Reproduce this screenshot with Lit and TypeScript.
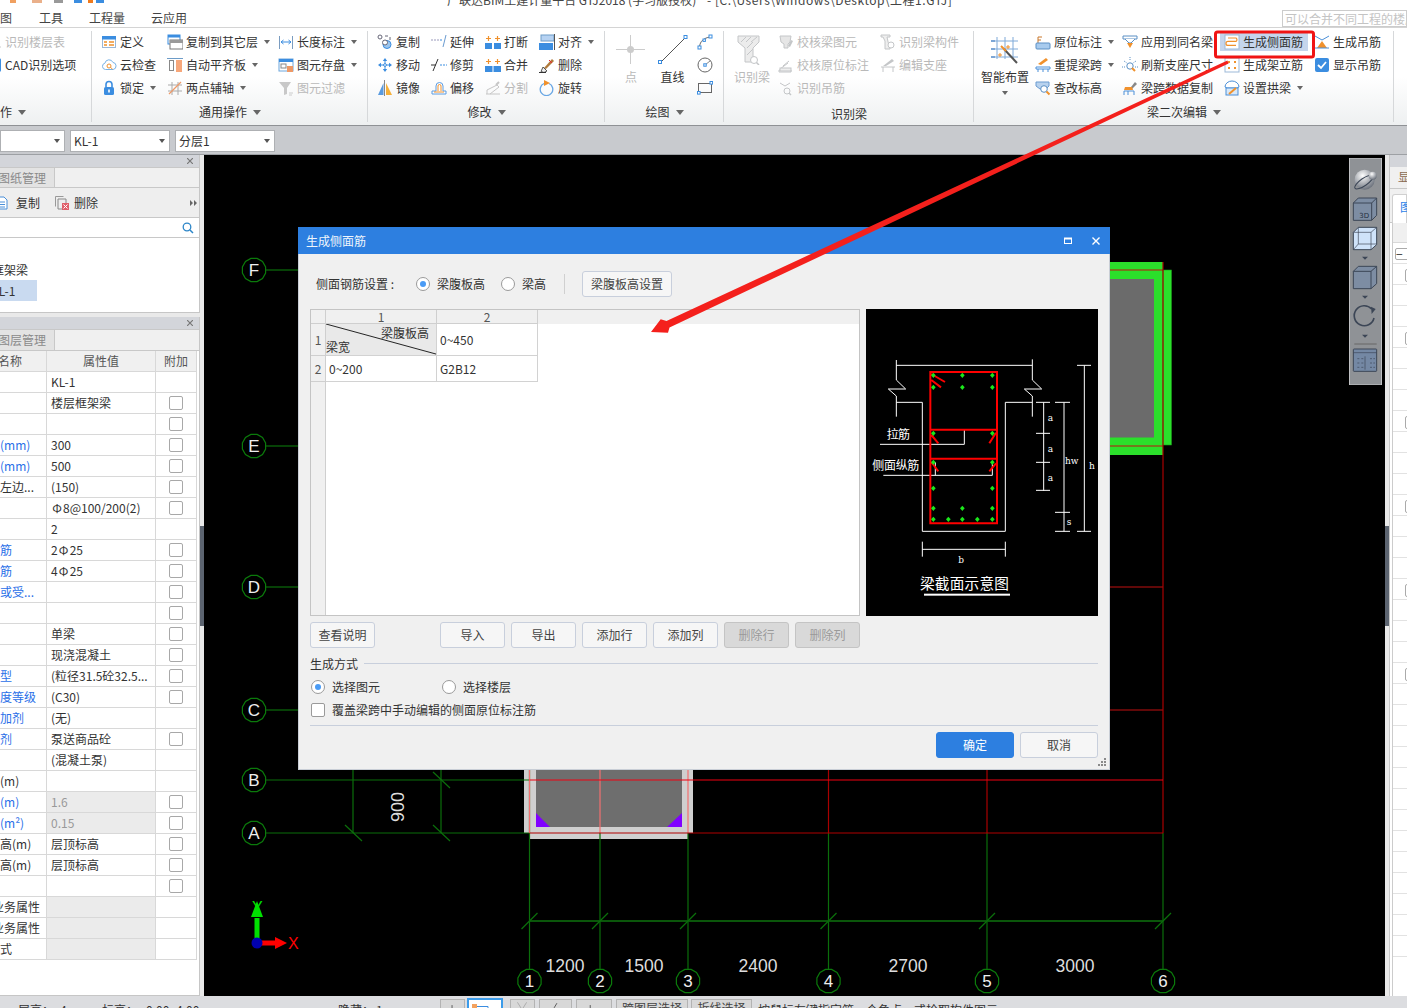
import { LitElement, html, css, svg, TemplateResult } from "lit";
import { customElement } from "lit/decorators.js";

const B = "#3b8de0", O = "#f0912c", G = "#c4c6c8", D = "#444";
const I: Record<string, TemplateResult> = {
  def: svg`<rect x="1.5" y="2.5" width="13" height="11" fill="#fff" stroke="#9bb8d8"/><rect x="1" y="2" width="14" height="3.5" fill="${B}"/><path d="M3 8h3M8 8h5M3 11h3M8 11h5" stroke="${O}" stroke-width="1.3"/>`,
  cloud: svg`<path d="M4.5 12.5a3.2 3.2 0 0 1-.6-6.3 4.2 4.2 0 0 1 8-.8 3.6 3.6 0 0 1 .3 7.1z" fill="#fff" stroke="#79b2e6"/><circle cx="8" cy="9" r="2" fill="none" stroke="${O}"/><path d="M9.5 10.5l2 1.5" stroke="${O}"/>`,
  lock: svg`<rect x="3" y="7" width="10" height="8" rx="1.5" fill="${B}"/><path d="M5 7V4.5a3 3 0 0 1 6 0V7" fill="none" stroke="${B}" stroke-width="1.6"/><rect x="7.2" y="9.5" width="1.6" height="3" fill="#fff"/>`,
  copyL: svg`<rect x="1" y="1" width="12" height="9" fill="#fff" stroke="${B}"/><rect x="1" y="1" width="12" height="2.5" fill="${B}"/><rect x="3" y="6" width="13" height="9" fill="#fff" stroke="#777"/><rect x="3" y="6" width="13" height="3" fill="#9a9a9a"/>`,
  align: svg`<path d="M0 1.5h16" stroke="#6d9cc8"/><rect x="2.5" y="3.5" width="4" height="10" fill="#fff" stroke="#888"/><rect x="9" y="3" width="6" height="12" fill="#f7a77a"/>`,
  twopt: svg`<path d="M5 2v13M11 2v13M1 5h14M1 11h14" stroke="#aaa"/><path d="M2 14L14 2" stroke="#ef9a68" stroke-width="1.2"/>`,
  len: svg`<path d="M1.5 2v13M14.5 2v13" stroke="#7a9cc0"/><path d="M3 8h10M3 8l2.5-2M3 8l2.5 2M13 8l-2.5-2M13 8l-2.5 2" stroke="${B}" fill="none"/>`,
  save: svg`<rect x="1" y="2" width="14" height="12" fill="#fff" stroke="#6da6dc"/><rect x="1" y="2" width="14" height="3" fill="${B}"/><rect x="3" y="7" width="5" height="4" fill="#fff" stroke="#888"/><rect x="9" y="9" width="6" height="6" fill="#e96"/>`,
  filter: svg`<path d="M1 2h12L9 8v6l-3 1V8z" fill="#c8c8c8"/><path d="M11 13h4M11 15h3" stroke="#ccc"/>`,
  copy: svg`<circle cx="3" cy="3" r="2" fill="#fff" stroke="#667"/><path d="M8 2h3M13 3v3" stroke="#667"/><circle cx="10" cy="10.5" r="4" fill="#9cc6ee" stroke="${B}"/><circle cx="8" cy="8.5" r="2.5" fill="#fff" stroke="#667"/>`,
  move: svg`<path d="M8 1L5.8 4h4.4zM8 15l-2.2-3h4.4zM1 8l3-2.2v4.4zM15 8l-3-2.2v4.4z" fill="${B}"/><path d="M8 4v8M4 8h8" stroke="${B}"/><circle cx="8" cy="8" r="1.4" fill="#fff" stroke="${B}"/>`,
  mirror: svg`<path d="M1 15L6.5 3v12z" fill="#5a9be0"/><path d="M7.5 0v16" stroke="#888"/><path d="M9 3l6 12H9z" fill="#f6b13a"/>`,
  extend: svg`<path d="M0 6h8" stroke="#99b" stroke-dasharray="2 1"/><path d="M9 6h3" stroke="${B}" stroke-dasharray="2 1"/><path d="M15 1l-3 12" stroke="#6a9bd0"/>`,
  trim: svg`<path d="M0 8h5" stroke="#333"/><path d="M9 8h7" stroke="${B}" stroke-dasharray="2 1"/><path d="M2 14L7 2" stroke="#333"/>`,
  offset: svg`<path d="M1 14h14v-3h-3V6a3 3 0 0 0-7 0v5H1z" fill="#fff" stroke="#5a9be0"/><path d="M3 12h10M7 11V6a1.5 1.5 0 0 1 3 0v5" fill="none" stroke="${O}"/>`,
  brk: svg`<rect x="0" y="9" width="7" height="6" fill="${B}"/><rect x="9" y="9" width="7" height="6" fill="${B}"/><path d="M3.5 2v5M1 4.5h5M12.5 2v5M10 4.5h5" stroke="${O}" stroke-width="1.2"/>`,
  merge: svg`<rect x="0" y="9" width="16" height="6" fill="${B}"/><path d="M8 9v6" stroke="#fff"/><path d="M3.5 2v5M1 4.5h5M12.5 2v5M10 4.5h5" stroke="${O}" stroke-width="1.2"/>`,
  split: svg`<path d="M1 14h14M2 14v-4l10-5 2 2-9 7" fill="none" stroke="#c6c6c6"/><path d="M11 5l3-3" stroke="#c6c6c6" stroke-width="2"/>`,
  alignT: svg`<rect x="2" y="1" width="13" height="6" fill="#b6d2f2" stroke="#6d9cc8"/><rect x="0" y="9" width="14" height="7" fill="${B}"/><path d="M15.5 0v16" stroke="#555"/>`,
  del: svg`<path d="M5 11l8-9 2 2-8 8z" fill="#b07a3c"/><path d="M4 10l4 4-3 1.5-3-1z" fill="#eee" stroke="#555"/><path d="M0 15.5h7" stroke="#333"/><path d="M10 3l3 3" stroke="#e23"/>`,
  rot: svg`<path d="M5 3.5a6.3 6.3 0 1 0 5 0" fill="none" stroke="#6aa7e4" stroke-width="1.3"/><path d="M5 0l6 3-6 3z" fill="${O}"/>`,
  chk: svg`<path d="M2 2h11l-1 6-2 2v4H6v-4L3 8z" fill="#e6e6e6" stroke="${G}"/><path d="M10 12l3-6 2 1-3 6z" fill="${G}"/>`,
  chk2: svg`<path d="M1 13h12v2H1zM2 12l8-6M5 9l6-5" stroke="${G}" fill="none"/><rect x="2" y="11" width="11" height="3" fill="#eee" stroke="${G}"/>`,
  hang: svg`<path d="M2 3l5 3 5-3" fill="none" stroke="${G}"/><circle cx="9" cy="11" r="3" fill="none" stroke="${G}"/><path d="M11 13l2 2" stroke="${G}" stroke-width="1.5"/>`,
  rec: svg`<path d="M1 1h9v2H7l2 9 1 1v2H5V7L3 3H1z" fill="#eee" stroke="${G}"/><circle cx="11" cy="11" r="3" fill="#fff" stroke="${G}"/>`,
  seat: svg`<path d="M1 10h14M3 10v5M13 10v5" stroke="${G}"/><path d="M3 9l9-7 2 2-8 5z" fill="${G}"/>`,
  place: svg`<path d="M3 3v7" stroke="#c9772a"/><path d="M3 3h4M3 6h3" stroke="#c9772a"/><rect x="1" y="9" width="14" height="6" rx="1" fill="#a8cbee" stroke="#5b8fc4"/>`,
  lift: svg`<path d="M3 7l8-6 2 2-7 5" fill="${O}"/><path d="M1 10h14v2H1zM3 12v3M8 12v3M13 12v3" fill="none" stroke="#4a8fd8"/>`,
  modz: svg`<path d="M1 2h13v4l-3 3H5L1 6z" fill="#b8d2ee" stroke="#6a9bd0"/><circle cx="9" cy="9" r="3.3" fill="#fff" stroke="#5a8fc4"/><path d="M11.5 11.5l3 3" stroke="${O}" stroke-width="2"/>`,
  apply: svg`<path d="M1 2h14v3H1z" fill="#fff" stroke="#5a8fc4"/><path d="M3 5l4 4h2l4-4" fill="#fff" stroke="#5a8fc4"/><path d="M5 9h6l-3 5z" fill="${O}"/>`,
  refresh: svg`<circle cx="8" cy="9" r="3.2" fill="#fff" stroke="#5a8fc4"/><path d="M8 0v4M2 4l3 2M14 4l-3 2M0 10h3M13 10h3" stroke="#5a8fc4" stroke-dasharray="1 1"/><path d="M10 11l3 3" stroke="${O}" stroke-width="2"/>`,
  brush: svg`<path d="M9 7l4-5 2 2-5 5z" fill="#888"/><path d="M3 7l7 0 1 3H2z" fill="${O}"/><path d="M2 11h10v4M2 11v4M6 11v4" fill="none" stroke="#4a8fd8"/>`,
  side: svg`<rect x="1" y="1" width="14" height="14" fill="#fff" stroke="#9db9d8"/><path d="M4 4h8a2 2 0 0 1 0 3.4H4a2 2 0 0 0 0 4h8" fill="none" stroke="${O}" stroke-width="1.2"/>`,
  stand: svg`<rect x="1" y="1" width="14" height="14" fill="#fff" stroke="#9db9d8"/><path d="M4 4h2v2H4zM10 4h2v2h-2zM4 10h2v2H4zM10 10h2v2h-2z" fill="${O}"/>`,
  arch: svg`<path d="M1 7a7 6 0 0 1 14 0l-2 1H3z" fill="#fff" stroke="#4a8fd8"/><rect x="2" y="8" width="12" height="7" fill="#d8e8f8" stroke="#4a8fd8"/><path d="M5 14l7-6" stroke="${O}" stroke-width="2"/>`,
  hang2: svg`<path d="M1 2l7 4 7-4" fill="none" stroke="#4a8fd8"/><path d="M8 7l5 7H3z" fill="${O}"/><path d="M1 14h14" stroke="#4a8fd8"/>`,
  tick: svg`<rect x="1" y="1" width="14" height="14" rx="2" fill="#3b8de0"/><path d="M4 8l3 3 5-6" fill="none" stroke="#fff" stroke-width="1.8"/>`,
  arc: svg`<path d="M2.5 13C3 7 7 4 13 3" fill="none" stroke="#666"/><rect x="1" y="12" width="3" height="3" fill="#fff" stroke="${B}"/><rect x="12" y="1" width="3" height="3" fill="#fff" stroke="${B}"/><rect x="6" y="5" width="2.4" height="2.4" fill="#fff" stroke="${B}"/>`,
  circ: svg`<circle cx="8" cy="8" r="7" fill="none" stroke="#666"/><path d="M8 8l5-4" stroke="#888"/><rect x="6.8" y="6.8" width="2.4" height="2.4" fill="#fff" stroke="${B}"/>`,
  rect: svg`<rect x="1.5" y="3.5" width="13" height="9" fill="none" stroke="#666"/><rect x="0.5" y="11.5" width="2.6" height="2.6" fill="#fff" stroke="${B}"/><rect x="13" y="1.5" width="2.6" height="2.6" fill="#fff" stroke="${B}"/>`,
};

type Item = { i?: string; t?: string; a?: boolean; d?: boolean; hl?: boolean };
type Block =
  | { w: number; rows: Item[] }
  | { w: number; big: TemplateResult; t: string; d?: boolean; a?: boolean; h: number; mr?: number };
type Group = { w: number; pad: number; label: string; arrow: boolean; left?: boolean; low?: boolean; blocks: Block[] };

const bigPoint = svg`<path d="M14.5 0v29M0 14.5h29" stroke="#ccc"/><circle cx="14.5" cy="14.5" r="3.5" fill="#ccc"/>`;
const bigLine = svg`<path d="M3 27L27 3" stroke="#555"/><rect x="0.5" y="25.5" width="3" height="3" fill="#fff" stroke="${B}"/><rect x="26" y="0.5" width="3" height="3" fill="#fff" stroke="${B}"/>`;
const bigBeam = svg`<path d="M1 1h21v6l-6 6v14H8V13L1 7z" fill="#ececec" stroke="${G}"/><path d="M4 7l5-5M9 7l5-5M14 7l6-5M10 13l6-6M10 20l6-6" stroke="${G}"/><circle cx="17" cy="25" r="3.5" fill="#fff" stroke="${G}"/><path d="M19.5 27.5l2.5 2.5" stroke="${G}" stroke-width="1.5"/>`;
const bigSmart = svg`<path d="M7 2v22M15 2v22M23 2v22M1 6h27M1 14h27M1 22h27" stroke="#7fa9d8"/><path d="M1 6h4M1 14h4M1 22h4" stroke="#3b78c0"/><path d="M14 14l13 14" stroke="#555" stroke-width="2"/><path d="M11 11l5 5" stroke="${O}" stroke-width="2"/><path d="M18 10v4M16 12h4M10 18v4M8 20h4" stroke="${O}"/>`;

const GROUPS: Group[] = [
  { w: 92, pad: -14, label: "作", arrow: true, left: true, blocks: [
    { w: 100, rows: [{ i: "filter", t: "识别楼层表", d: true }, { i: "tick", t: "CAD识别选项" }] },
  ] },
  { w: 276, pad: 9, label: "通用操作", arrow: true, blocks: [
    { w: 66, rows: [{ i: "def", t: "定义" }, { i: "cloud", t: "云检查" }, { i: "lock", t: "锁定", a: true }] },
    { w: 111, rows: [{ i: "copyL", t: "复制到其它层", a: true }, { i: "align", t: "自动平齐板", a: true }, { i: "twopt", t: "两点辅轴", a: true }] },
    { w: 88, rows: [{ i: "len", t: "长度标注", a: true }, { i: "save", t: "图元存盘", a: true }, { i: "filter", t: "图元过滤", d: true }] },
  ] },
  { w: 237, pad: 9, label: "修改", arrow: true, blocks: [
    { w: 54, rows: [{ i: "copy", t: "复制" }, { i: "move", t: "移动" }, { i: "mirror", t: "镜像" }] },
    { w: 54, rows: [{ i: "extend", t: "延伸" }, { i: "trim", t: "修剪" }, { i: "offset", t: "偏移" }] },
    { w: 54, rows: [{ i: "brk", t: "打断" }, { i: "merge", t: "合并" }, { i: "split", t: "分割", d: true }] },
    { w: 60, rows: [{ i: "alignT", t: "对齐", a: true }, { i: "del", t: "删除" }, { i: "rot", t: "旋转" }] },
  ] },
  { w: 119, pad: 5, label: "绘图", arrow: true, blocks: [
    { w: 42, big: bigPoint, t: "点", d: true, h: 29 },
    { w: 41, big: bigLine, t: "直线", h: 29, mr: 4 },
    { w: 20, rows: [{ i: "arc" }, { i: "circ" }, { i: "rect" }] },
  ] },
  { w: 250, pad: 6, label: "识别梁", arrow: false, low: true, blocks: [
    { w: 44, big: bigBeam, t: "识别梁", d: true, h: 30, mr: 4 },
    { w: 102, rows: [{ i: "chk", t: "校核梁图元", d: true }, { i: "chk2", t: "校核原位标注", d: true }, { i: "hang", t: "识别吊筋", d: true }] },
    { w: 90, rows: [{ i: "rec", t: "识别梁构件", d: true }, { i: "seat", t: "编辑支座", d: true }] },
  ] },
  { w: 420, pad: 4, label: "梁二次编辑", arrow: true, blocks: [
    { w: 54, big: bigSmart, t: "智能布置", a: true, h: 30, mr: 3 },
    { w: 87, rows: [{ i: "place", t: "原位标注", a: true }, { i: "lift", t: "重提梁跨", a: true }, { i: "modz", t: "查改标高" }] },
    { w: 102, rows: [{ i: "apply", t: "应用到同名梁" }, { i: "refresh", t: "刷新支座尺寸" }, { i: "brush", t: "梁跨数据复制" }] },
    { w: 90, rows: [{ i: "side", t: "生成侧面筋", hl: true }, { i: "stand", t: "生成架立筋" }, { i: "arch", t: "设置拱梁", a: true }] },
    { w: 70, rows: [{ i: "hang2", t: "生成吊筋" }, { i: "tick", t: "显示吊筋" }] },
  ] },
];

type Row = { n?: string; v?: string; c?: boolean; g?: boolean; b?: boolean; crop?: boolean };
const ROWS: Row[] = [
  { v: "KL-1" },
  { v: "楼层框架梁", c: true },
  { c: true },
  { n: "(mm)", v: "300", c: true, b: true },
  { n: "(mm)", v: "500", c: true, b: true },
  { n: "左边...", v: "(150)", c: true },
  { v: "Φ8@100/200(2)", c: true },
  { v: "2" },
  { n: "筋", v: "2Φ25", c: true, b: true },
  { n: "筋", v: "4Φ25", c: true, b: true },
  { n: "或受...", c: true, b: true },
  { c: true },
  { v: "单梁", c: true },
  { v: "现浇混凝土", c: true },
  { n: "型", v: "(粒径31.5砼32.5...", c: true, b: true },
  { n: "度等级", v: "(C30)", c: true, b: true },
  { n: "加剂", v: "(无)", b: true },
  { n: "剂", v: "泵送商品砼", c: true, b: true },
  { v: "(混凝土泵)" },
  { n: "(m)" },
  { n: "(m)", v: "1.6", c: true, g: true, b: true },
  { n: "(m²)", v: "0.15", c: true, g: true, b: true },
  { n: "高(m)", v: "层顶标高", c: true },
  { n: "高(m)", v: "层顶标高", c: true },
  { c: true },
  { n: "业务属性", g: true, crop: true },
  { n: "业务属性", g: true, crop: true },
  { n: "式", g: true },
];

const poly12 = (cx: number, cy: number, r: number) =>
  Array.from({ length: 12 }, (_, k) => {
    const a = (Math.PI / 6) * k + Math.PI / 12;
    return `${(cx + r * Math.cos(a)).toFixed(1)},${(cy + r * Math.sin(a)).toFixed(1)}`;
  }).join(" ");

const H_AXES: [string, number][] = [["F", 270], ["E", 446], ["D", 587], ["C", 710], ["B", 780], ["A", 833]];
const V_AXES: [string, number][] = [["1", 529.5], ["2", 600], ["3", 688], ["4", 828.5], ["5", 987], ["6", 1163]];
const DIMS: [string, number][] = [["1200", 565], ["1500", 644], ["2400", 758], ["2700", 908], ["3000", 1075]];
const DOTS = [[220,226],[307,226],[397,226],[220,262],[307,262],[397,262],[220,400],[397,400],[220,487],[397,487],[220,565],[397,565],[220,625],[307,625],[397,625],[220,658],[265,658],[307,658],[352,658],[397,658]];

@customElement("section-diagram")
class SectionDiagram extends LitElement {
  static styles = css`
    :host { display: block; width: 232px; height: 307px; background: #000; }
    svg { display: block; width: 232px; height: 307px; }
    .w { fill: none; stroke: #fff; stroke-width: 3; }
    .r { fill: none; stroke: #f00; stroke-width: 6; }
    text { fill: #fff; font-family: "Noto Sans CJK SC", sans-serif; }
    .s { font-family: "DejaVu Serif", serif; font-size: 27px; }
  `;
  render() {
    return html`<svg viewBox="18 27 696 921">
      <path class="w" d="M109 196H517M109 180V240L137 267H85L109 288V350M517 178V240L545 267H493L517 288V350"/>
      <path class="w" d="M109 307H187V694H436V307H517"/>
      <path class="w" d="M187 748H436M187 725V770M436 725V770"/>
      <path class="w" d="M551 307V572M528 307H570M528 400H570M528 487H570M528 571H570"/>
      <path class="w" d="M612 307V694M585 307H630M585 637H630M585 694H630M651 196H693M651 694H693M673 196V694"/>
      <path class="w" d="M60 433H313V390M70 526H397V490M226 526V487"/>
      <path class="r" d="M211 216H411V670H211ZM211 389H411M211 476H411M214 222L255 246M214 240L243 262M214 405L235 430M408 398L388 430M214 486L235 514M408 490L388 514"/>
      ${DOTS.map(([x, y]) => svg`<path d="M${x} ${y - 8}L${x + 7} ${y}L${x} ${y + 8}L${x - 7} ${y}Z" fill="#1be81b"/>`)}
      <text x="80" y="416" font-size="36" textLength="70">拉筋</text>
      <text x="37" y="510" font-size="36" textLength="141">侧面纵筋</text>
      <text x="180" y="866" font-size="44" textLength="267">梁截面示意图</text>
      <rect x="192" y="881" width="258" height="6" fill="#fff"/>
      <text class="s" x="295" y="788">b</text>
      <text class="s" x="563" y="362">a</text><text class="s" x="563" y="455">a</text><text class="s" x="563" y="543">a</text>
      <text class="s" x="615" y="491">hw</text><text class="s" x="687" y="507">h</text><text class="s" x="620" y="675">s</text>
    </svg>`;
  }
}

@customElement("gen-dialog")
class GenDialog extends LitElement {
  static styles = css`
    :host { display: flex; flex-direction: column; box-sizing: border-box; width: 812px; height: 543px; background: #f0f0f0; border: 1px solid #c9ced6; border-top: 0; font: 12px/16px "Noto Sans CJK SC", sans-serif; color: #333; position: relative; }
    .title { height: 27px; margin: 0 -1px; background: #2d7fe0; color: #fff; display: flex; align-items: center; padding: 0 0 0 8px; flex: none; }
    .title span { flex: 1; opacity: .92; }
    .title svg { width: 10px; height: 10px; display: block; }
    .tb { width: 28px; display: flex; justify-content: center; }
    .body { padding: 0 11px; display: flex; flex-direction: column; flex: 1; }
    .set { display: flex; align-items: center; padding: 17px 0 0 6px; height: 26px; margin-bottom: 12px; box-sizing: content-box; }
    .lab { width: 100px; }
    .radio { width: 12px; height: 12px; border: 1px solid #9a9a9a; border-radius: 50%; background: #fff; flex: none; display: flex; align-items: center; justify-content: center; }
    .radio.on::after { content: ""; width: 6px; height: 6px; border-radius: 50%; background: #4a9bf5; }
    .opt { display: flex; align-items: center; gap: 7px; }
    .o1 { width: 85px; }
    .o2 { width: 63px; }
    .sep { width: 1px; height: 20px; background: #d0d0d0; margin-right: 17px; }
    .btn { width: 65px; height: 26px; box-sizing: border-box; border: 1px solid #c8cfdc; border-radius: 3px; background: #f6f6f6; color: #444; display: flex; align-items: center; justify-content: center; flex: none; }
    .btn.wide { width: 90px; }
    .btn.off { background: #d9d9d9; color: #9a9a9a; border-color: #c4c4c4; }
    .btn.pri { width: 78px; background: #2d7fe0; border-color: #2d7fe0; color: #fff; }
    .btn.ok { width: 78px; }
    .mid { display: flex; gap: 6px; height: 307px; flex: none; }
    .sheet { width: 550px; box-sizing: border-box; border: 1px solid #c4c4c4; background: #fff; display: grid; grid-template-columns: 15px 111px 101px 1fr; grid-template-rows: 14px 32px 26px 1fr; }
    .sheet > div { box-sizing: border-box; color: #333; line-height: 14px; }
    .hd { background: #f0f0f0; border-right: 1px solid #cfcfcf; border-bottom: 1px solid #cfcfcf; text-align: center; color: #555 !important; display: flex; align-items: center; justify-content: center; }
    .gut { background: #f0f0f0; border-right: 1px solid #cfcfcf; }
    .fill { background: #f0f0f0; }
    .cell { border-right: 1px solid #d2d2d2; border-bottom: 1px solid #d2d2d2; display: flex; align-items: center; padding-left: 3px; }
    .diag { position: relative; background: #e9e9e9; padding: 0; }
    .diag svg { position: absolute; inset: 0; width: 100%; height: 100%; }
    .diag .a { position: absolute; right: 7px; top: 2px; }
    .diag .b { position: absolute; left: 0; bottom: 1px; }
    .btns { display: flex; gap: 6px; margin-top: 6px; flex: none; }
    .push { margin-left: 59px; }
    .mode { display: flex; align-items: center; gap: 6px; height: 16px; margin-top: 8px; flex: none; }
    .mode i { flex: 1; height: 1px; background: #c8cfdc; margin-top: -2px; }
    .line { display: flex; align-items: center; height: 16px; margin-top: 7px; padding-left: 1px; flex: none; }
    .line .first { width: 131px; }
    .cb { width: 12px; height: 12px; border: 1px solid #9a9a9a; border-radius: 2px; background: #fff; flex: none; margin-right: 7px; }
    hr { border: 0; height: 1px; background: #c8cfdc; margin: 7px 0 0; flex: none; width: 100%; }
    .foot { display: flex; justify-content: flex-end; gap: 6px; margin-top: 6px; flex: none; }
    .grip { position: absolute; right: 3px; bottom: 3px; width: 8px; height: 8px; }
  `;
  render() {
    return html`
      <div class="title"><span>生成侧面筋</span>
        <div class="tb"><svg viewBox="0 0 10 10"><rect x="1.5" y="2.5" width="7" height="5" fill="none" stroke="#fff"/><path d="M1 2.5h8" stroke="#fff" stroke-width="2"/></svg></div>
        <div class="tb"><svg viewBox="0 0 10 10"><path d="M1.5 1.5l7 7M8.5 1.5l-7 7" stroke="#fff" stroke-width="1.4"/></svg></div>
      </div>
      <div class="body">
        <div class="set">
          <div class="lab">侧面钢筋设置 :</div>
          <div class="opt o1"><div class="radio on"></div>梁腹板高</div>
          <div class="opt o2"><div class="radio"></div>梁高</div>
          <div class="sep"></div>
          <div class="btn wide">梁腹板高设置</div>
        </div>
        <div class="mid">
          <div class="sheet">
            <div class="hd"></div><div class="hd">1</div><div class="hd">2</div><div class="fill"></div>
            <div class="hd">1</div>
            <div class="cell diag"><svg viewBox="0 0 110 32" preserveAspectRatio="none"><path d="M0 0L110 31" stroke="#222"/></svg><span class="a">梁腹板高</span><span class="b">梁宽</span></div>
            <div class="cell">0~450</div><div></div>
            <div class="hd">2</div><div class="cell">0~200</div><div class="cell">G2B12</div><div></div>
            <div class="gut"></div><div></div><div></div><div></div>
          </div>
          <section-diagram></section-diagram>
        </div>
        <div class="btns">
          <div class="btn">查看说明</div>
          <div class="btn push">导入</div><div class="btn">导出</div><div class="btn">添加行</div><div class="btn">添加列</div>
          <div class="btn off">删除行</div><div class="btn off">删除列</div>
        </div>
        <div class="mode">生成方式<i></i></div>
        <div class="line">
          <div class="opt first"><div class="radio on"></div>选择图元</div>
          <div class="opt"><div class="radio"></div>选择楼层</div>
        </div>
        <div class="line"><div class="cb"></div>覆盖梁跨中手动编辑的侧面原位标注筋</div>
        <hr />
        <div class="foot"><div class="btn pri">确定</div><div class="btn ok">取消</div></div>
      </div>
      <svg class="grip" viewBox="0 0 8 8"><path d="M6 0h2v2H6zM3 3h2v2H3zM6 3h2v2H6zM0 6h2v2H0zM3 6h2v2H3zM6 6h2v2H6z" fill="#8a8a8a"/></svg>
    `;
  }
}

@customElement("app-root")
class AppRoot extends LitElement {
  static styles = css`
    :host { display: block; width: 1407px; height: 1008px; overflow: hidden; position: relative; font: 12px/16px "Noto Sans CJK SC", sans-serif; color: #333; background: #c8cace; }
    .app { display: flex; flex-direction: column; width: 1407px; height: 1008px; }
    .top { background: #fff; height: 27px; border-bottom: 1px solid #d4d4d4; flex: none; position: relative; }
    .title { height: 8px; overflow: hidden; line-height: 0; padding-left: 447px; color: #444; white-space: pre; position: relative; }
    .title .path { letter-spacing: .55px; }
    .quick { position: absolute; left: 0; top: 0; display: flex; height: 3px; }
    .quick i { display: block; height: 3px; }
    .q1 { width: 6px; margin-left: 10px; background: #f0a060; }
    .q2 { width: 10px; margin-left: 16px; background: #eab08a; }
    .q3 { width: 9px; margin-left: 12px; background: #999; }
    .q4 { width: 8px; margin-left: 11px; background: #3b8de0; }
    .q5 { width: 5px; margin-left: 6px; background: #f07a1c; }
    .q6 { width: 8px; margin-left: 3px; background: #3b8de0; }
    .menu { display: flex; height: 19px; align-items: center; line-height: 19px; color: #444; position: relative; }
    .menu .m0 { margin-right: 27px; margin-left: -12px; }
    .menu .m1 { margin-right: 26px; }
    .menu .m2 { margin-right: 26px; }
    .hint { position: absolute; left: 1282px; top: 10px; width: 125px; height: 17px; box-sizing: border-box; border: 1px solid #ccc; color: #c4c4c4; background: #fff; line-height: 15px; padding-left: 2px; white-space: nowrap; overflow: hidden; }
    .ribbon { display: flex; height: 97px; flex: none; background: linear-gradient(#fff 0, #fff 50%, #eef0f1 100%); box-shadow: 0 1px 0 #8f9195; position: relative; z-index: 1; overflow: hidden; }
    .group { flex: none; box-sizing: border-box; display: flex; flex-direction: column; position: relative; }
    .group::after { content: ""; position: absolute; right: 0; top: 3px; bottom: 3px; width: 1px; background: #d6d8da; }
    .gbody { display: flex; height: 70px; padding-top: 2px; box-sizing: content-box; flex: none; }
    .col { display: flex; flex-direction: column; flex: none; }
    .item { height: 23px; display: flex; align-items: center; white-space: nowrap; position: relative; }
    .item > * { position: relative; }
    .ic { width: 16px; height: 16px; margin-right: 3px; flex: none; display: block; }
    .item.d { color: #b9b9b9; }
    .item.hl::before { content: ""; position: absolute; left: -4px; width: 88px; top: 3px; height: 18px; background: #c5d5ec; }
    .dd { width: 0; height: 0; border: 3px solid transparent; border-top: 4px solid #666; border-bottom: 0; margin-left: 6px; flex: none; }
    .big { display: flex; flex-direction: column; align-items: center; flex: none; white-space: nowrap; }
    .bigic { height: 39px; display: flex; align-items: center; justify-content: center; }
    .bigic svg { display: block; width: 30px; }
    .big .t { line-height: 16px; }
    .big.d { color: #b9b9b9; }
    .big .dd { margin: 6px 0 0; }
    .glabel { height: 24px; display: flex; align-items: center; justify-content: center; flex: none; }
    .glabel.gl { justify-content: flex-start; }
    .glabel.low { padding-top: 3px; box-sizing: border-box; }
    .glabel .dd { border-top-width: 5px; border-left-width: 4px; border-right-width: 4px; }
    .tbar { height: 29px; box-sizing: border-box; padding-top: 2px; flex: none; background: #c8cace; border-bottom: 1px solid #9da0a4; margin-top: 1px; display: flex; align-items: center; gap: 5px; }
    .sel { height: 22px; box-sizing: border-box; border: 1px solid #aeb0b3; background: #fff; display: flex; align-items: center; justify-content: space-between; padding: 0 4px 0 3px; flex: none; }
    .sel .dd { border-top-color: #555; }
    .s0 { width: 65px; }
    .s1 { width: 100px; }
    .main { display: flex; height: 841px; flex: none; }
    .left { width: 200px; flex: none; display: flex; flex-direction: column; background: #e9e9e9; }
    .panel { background: #fff; border-right: 1px solid #c6c6c6; border-bottom: 1px solid #c6c6c6; display: flex; flex-direction: column; overflow: hidden; }
    .p1 { height: 158px; flex: none; margin-bottom: 4px; box-sizing: border-box; }
    .p2 { flex: 1; }
    .p2 .ptabs { height: 22px; }
    .phead { height: 12px; background: #d3d5da; flex: none; display: flex; align-items: center; justify-content: flex-end; padding-right: 6px; }
    .phead svg { width: 6px; height: 6px; display: block; }
    .ptabs { height: 21px; background: #f0f0f0; border-bottom: 1px solid #c8c8c8; border-top: 1px solid #c8c8c8; box-sizing: border-box; flex: none; display: flex; }
    .ptab { width: 54px; background: #e3e3e3; border-right: 1px solid #c8c8c8; color: #8a8a8a; line-height: 19px; white-space: nowrap; overflow: hidden; text-indent: -2px; }
    .ptools { height: 30px; box-sizing: border-box; background: #eeeeee; border-bottom: 1px solid #c8c8c8; flex: none; display: flex; align-items: center; position: relative; }
    .ptool { display: flex; align-items: center; }
    .ptool svg { width: 14px; height: 14px; display: block; }
    .t1 { margin-left: -5px; gap: 7px; }
    .t2 { margin-left: 15px; gap: 5px; }
    .more { margin-left: auto; margin-right: 2px; width: 7px; height: 6px; display: block; }
    .psearch { height: 19px; border-bottom: 1px solid #c8c8c8; flex: none; display: flex; justify-content: flex-end; align-items: center; padding-right: 5px; }
    .psearch svg { width: 12px; height: 12px; display: block; }
    .tree { flex: 1; padding-top: 21px; }
    .tree div { height: 21px; line-height: 21px; white-space: nowrap; overflow: hidden; }
    .tree .c { text-indent: -8px; }
    .tree .sel2 { width: 37px; background: #c9daf0; text-indent: -9px; }
    .trow { display: grid; grid-template-columns: 47px 109px 41px; height: 21px; width: 197px; flex: none; }
    .trow > div { box-sizing: border-box; border-right: 1px solid #d8d8d8; border-bottom: 1px solid #d8d8d8; line-height: 20px; white-space: nowrap; overflow: hidden; }
    .trow.head > div { background: #f0f0f0; text-align: center; color: #555; }
    .trow.head .n { text-align: left; text-indent: -2px; }
    .n { color: #333; }
    .n.b { color: #2a6fe8; }
    .n.crop { text-indent: -8px; }
    .v { padding-left: 4px; }
    .v.g { background: #ebebeb; color: #999; }
    .rebar { display: inline-block; width: 12px; text-align: center; }
    .x { display: flex; align-items: center; justify-content: center; }
    .x span { width: 12px; height: 12px; border: 1px solid #a8a8a8; border-radius: 2px; display: block; margin-left: -1px; }
    .gap { width: 4px; flex: none; background: #e9e9e9; display: flex; align-items: center; }
    .gap i { display: block; width: 4px; height: 100px; background: #5c6470; }
    .canvas { width: 1181px; flex: none; background: #000; position: relative; overflow: hidden; }
    .canvas > svg { display: block; width: 1181px; height: 841px; }
    .canvas text { font-family: "Liberation Sans", sans-serif; }
    .float { position: absolute; left: 1145px; top: 3px; width: 33px; height: 227px; background: #8f9296; }
    .float svg { display: block; width: 33px; height: 227px; }
    .right { width: 18px; flex: none; background: #fff; display: flex; flex-direction: column; overflow: hidden; border-left: 1px solid #c8c8c8; box-sizing: border-box; }
    .right .phead { height: 12px; }
    .rt { height: 21px; background: #f0f0f0; border-bottom: 1px solid #c8c8c8; flex: none; padding-left: 8px; line-height: 20px; color: #8a6a50; }
    .rt2 { height: 34px; background: #f0f0f0; border-bottom: 1px solid #c8c8c8; flex: none; padding: 5px 0 0 2px; box-sizing: border-box; }
    .rt2 div { background: #fff; height: 29px; border: 1px solid #d0d0d0; border-bottom: 0; border-radius: 3px 0 0 0; padding-left: 7px; line-height: 24px; color: #2a7fe8; }
    .rgrid { flex: 1; margin-left: 2px; position: relative; background: #fff; border-left: 1px solid #ccc; }
    .rh { height: 19px; background: #f0f0f0; border-bottom: 1px solid #d8d8d8; }
    .rb { height: 717px; background: repeating-linear-gradient(#fff 0, #fff 20px, #e2e2e2 20px, #e2e2e2 21px); position: relative; }
    .minus { position: absolute; left: 2px; top: 5px; width: 14px; height: 12px; box-sizing: border-box; border: 1px solid #aaa; border-radius: 2px; background: #fff; line-height: 9px; }
    .bx { position: absolute; left: 12px; width: 12px; height: 13px; box-sizing: border-box; border: 1px solid #aaa; border-radius: 2px; background: #fff; }
    .b1 { top: 26px; } .b2 { top: 89px; } .b3 { top: 173px; } .b4 { top: 257px; } .b5 { top: 341px; } .b6 { top: 425px; }
    .status { height: 12px; flex: none; background: #dcdde0; position: relative; display: flex; overflow: hidden; align-items: flex-start; }
    .status .txt { padding-top: 7px; line-height: 14px; white-space: nowrap; color: #333; flex: none; }
    .st0 { width: 18px; }
    .sb { height: 12px; margin-top: 3px; box-sizing: border-box; border: 1px solid #b3b3b3; border-bottom: 0; background: #d8d8d8; flex: none; text-align: center; line-height: 16px; color: #444; overflow: hidden; white-space: nowrap; position: relative; }
    .sb svg { position: absolute; left: 0; top: 0; width: 100%; height: 12px; }
    .sb.on { width: 36px; border: 2px solid #3b9bea; border-bottom: 0; background: #fff; margin-top: 2px; height: 12px; }
    .a1 { width: 25px; margin-right: 2px; }
    .a2 { width: 25px; margin-left: 7px; margin-right: 4px; }
    .a3 { width: 33px; margin-right: 4px; }
    .a4 { width: 36px; margin-right: 4px; }
    .sb.w1 { width: 72px; margin-right: 3px; }
    .sb.w2 { width: 61px; }
    .status .msg { margin-left: 6px; }
    .over { position: absolute; left: 0; top: 0; width: 1407px; height: 1008px; pointer-events: none; z-index: 5; }
    gen-dialog { position: absolute; left: 298px; top: 227px; z-index: 4; }
  `;

  private icon(name?: string) {
    return name ? html`<svg class="ic" viewBox="0 0 16 16">${I[name]}</svg>` : null;
  }
  private block(b: Block) {
    if ("rows" in b) {
      return html`<div class="col" style="width:${b.w}px">${b.rows.map(
        (r) => html`<div class="item ${r.d ? "d" : ""} ${r.hl ? "hl" : ""}">${this.icon(r.i)}${r.t ? html`<span>${r.t}</span>` : null}${r.a ? html`<span class="dd"></span>` : null}</div>`
      )}</div>`;
    }
    return html`<div class="big ${b.d ? "d" : ""}" style="width:${b.w}px;margin-right:${b.mr ?? 0}px">
      <div class="bigic"><svg viewBox="0 0 30 ${b.h}" height="${b.h}">${b.big}</svg></div>
      <div class="t">${b.t}</div>${b.a ? html`<span class="dd"></span>` : null}
    </div>`;
  }
  private value(v?: string) {
    if (!v || !v.includes("Φ")) return v ?? "";
    const [a, b] = v.split("Φ");
    return html`${a}<span class="rebar">Φ</span>${b}`;
  }
  private canvas() {
    return html`<svg viewBox="204 155 1181 841">
      <rect x="1110" y="262" width="53" height="193" fill="#2bdf2b"/>
      <rect x="1163" y="270" width="8.5" height="175" fill="#2bdf2b" stroke="#1a9a1a" stroke-width=".6"/>
      <rect x="1105" y="279" width="49" height="158.5" fill="#6b6b6b"/>
      <rect x="524" y="765" width="169" height="68" fill="#cfcfcf"/>
      <rect x="529.5" y="833" width="158.5" height="6" fill="#cfcfcf"/>
      <rect x="536" y="765" width="146" height="62" fill="#6e6e6e"/>
      <path d="M536 813V827H550ZM682 813V827H667Z" fill="#8000ff"/>
      ${H_AXES.map(([, y]) => svg`<path d="M266 ${y}H${y > 775 ? 529.5 : 298}" stroke="#0b6e0b" stroke-width="1.2"/>`)}
      <path d="M353 770V833M441 770V833" stroke="#0b6e0b" stroke-width="1.2"/>
      <path d="M345 825L362 841M433 825L450 841M433 772L450 788" stroke="#0b6e0b" stroke-width="1.2"/>
      ${V_AXES.map(([, x], k) => svg`<path d="M${x} ${k === 0 ? 770 : 833}V969" stroke="#0b6e0b" stroke-width="1.2"/>`)}
      <path d="M529.5 921H1163" stroke="#0a560a" stroke-width="2"/>
      ${V_AXES.map(([, x]) => svg`<path d="M${x - 8} 929L${x + 8} 913" stroke="#0b6e0b" stroke-width="1.2"/>`)}
      <path d="M1110 270H1163M1110 446H1163M1110 587H1163M1110 710H1163" stroke="#c01010" stroke-width="1.2"/>
      <path d="M1163 262V833M987 765V833M828.5 765V833" stroke="#a80000" stroke-width="1.2"/>
      <path d="M600 765V833M529.5 765V833M688 765V833" stroke="#f27070" stroke-width="1.2"/>
      <path d="M529.5 780H1163" stroke="#f00010" stroke-width="1.2"/>
      <path d="M529.5 833H1163" stroke="#b00000" stroke-width="1.2"/>
      ${H_AXES.map(([t, y]) => svg`<polygon points="${poly12(254, y, 12)}" fill="none" stroke="#0b7a0b" stroke-width="1.2"/><text x="254" y="${y + 6}" text-anchor="middle" font-size="17" fill="#eee">${t}</text>`)}
      ${V_AXES.map(([t, x]) => svg`<polygon points="${poly12(x, 981, 12)}" fill="none" stroke="#0b7a0b" stroke-width="1.2"/><text x="${x}" y="987" text-anchor="middle" font-size="17" fill="#eee">${t}</text>`)}
      ${DIMS.map(([t, x]) => svg`<text x="${x}" y="972" text-anchor="middle" font-size="18" textLength="39" lengthAdjust="spacingAndGlyphs" fill="#ddd">${t}</text>`)}
      <text transform="translate(404 807) rotate(-90)" text-anchor="middle" font-size="18" textLength="30" lengthAdjust="spacingAndGlyphs" fill="#ddd">900</text>
      <path d="M257 943V918" stroke="#00e000" stroke-width="5"/><path d="M257 901L263 917H251Z" fill="#00e000"/>
      <path d="M257 943H276" stroke="#f00" stroke-width="5"/><path d="M287 943L275 937V949Z" fill="#f00"/>
      <circle cx="257" cy="943" r="5.5" fill="#0000b0"/>
      <text x="252" y="913" font-size="16" fill="#00e000">Y</text>
      <text x="288" y="949" font-size="16" fill="#f00">X</text>
    </svg>`;
  }
  private floatBar() {
    return html`<svg viewBox="778 10 97 681">
      <defs><radialGradient id="ball" cx=".4" cy=".3" r=".8"><stop offset="0" stop-color="#fff"/><stop offset="1" stop-color="#59606c"/></radialGradient></defs>
      <rect x="778" y="10" width="97" height="681" fill="none" stroke="#c8cacc" stroke-width="3"/>
      <circle cx="824" cy="75" r="30" fill="url(#ball)"/>
      <ellipse cx="822" cy="82" rx="33" ry="11" transform="rotate(-35 822 82)" fill="none" stroke="#3c4656" stroke-width="3"/>
      <circle cx="848" cy="63" r="12" fill="url(#ball)"/>
      <g stroke="#3c4656" stroke-width="3" stroke-linejoin="round">
        <path d="M790 145L805 130H860V182L845 197H790Z" fill="#7d8da3"/><path d="M790 145H845V197M845 145L860 130" fill="none"/>
        <path d="M790 233L805 218H860V270L843 285H790Z" fill="#cfe3fa"/><path d="M790 233H843V285M843 233L860 218M790 285L805 268H860M805 218V268" fill="none" stroke-width="2"/>
        <path d="M790 350L805 335H860V387L843 402H790Z" fill="#7d8da3"/><path d="M790 350H843V402M843 350L860 335" fill="none"/>
        <path d="M845 463A30 30 0 1 0 852 490" fill="none" stroke-width="5"/>
        <rect x="790" y="583" width="70" height="67" rx="2" fill="#7488a4"/><path d="M790 594H860M825 605V645M802 612H808M802 625H808M802 638H808M840 612H846M840 625H846M840 638H846M814 612H820M814 625H820M814 638H820M850 612H855M850 625H855M850 638H855" fill="none" stroke-width="2"/>
      </g>
      <path d="M843 456L857 463L845 478Z" fill="#3c4656"/>
      <path d="M816 306H834L825 315ZM816 423H834L825 432ZM816 540H834L825 549Z" fill="#3c4656"/>
      <path d="M793 568H860" stroke="#666" stroke-width="3"/>
      <text x="808" y="190" font-size="21" fill="#253040" style="font-family:'DejaVu Sans',sans-serif">3D</text>
    </svg>`;
  }
  render() {
    return html`<div class="app">
      <div class="top">
        <div class="quick"><i class="q1"></i><i class="q2"></i><i class="q3"></i><i class="q4"></i><i class="q5"></i><i class="q6"></i></div>
        <div class="title">广联达BIM土建计量平台 GTJ2018 (学习版授权)    <span class="path">- [C:\\Users\\Windows\\Desktop\\工程1.GTJ]</span></div>
        <div class="menu"><span class="m0">视图</span><span class="m1">工具</span><span class="m2">工程量</span><span>云应用</span></div>
        <div class="hint">可以合并不同工程的楼层...</div>
      </div>
      <div class="ribbon">
        ${GROUPS.map((g) => html`<div class="group" style="width:${g.w}px">
          <div class="gbody" style="padding-left:${Math.max(g.pad, 0)}px;margin-left:${Math.min(g.pad, 0)}px">${g.blocks.map((b) => this.block(b))}</div>
          <div class="glabel ${g.left ? "gl" : ""} ${g.low ? "low" : ""}"><span>${g.label}</span>${g.arrow ? html`<span class="dd"></span>` : null}</div>
        </div>`)}
      </div>
      <div class="tbar">
        <div class="sel s0"><span></span><span class="dd"></span></div>
        <div class="sel s1"><span>KL-1</span><span class="dd"></span></div>
        <div class="sel s1"><span>分层1</span><span class="dd"></span></div>
      </div>
      <div class="main">
        <div class="left">
          <div class="panel p1">
            <div class="phead"><svg viewBox="0 0 7 7"><path d="M0 0l7 7M7 0L0 7" stroke="#777" stroke-width="1.4"/></svg></div>
            <div class="ptabs"><div class="ptab">图纸管理</div></div>
            <div class="ptools">
              <div class="ptool t1"><svg viewBox="0 0 14 14"><path d="M1 1h8l3 3v9H1z" fill="#fff" stroke="#4a8fd8"/><path d="M3 6h7M3 8.5h7M3 11h7" stroke="#4a8fd8"/></svg>复制</div>
              <div class="ptool t2"><svg viewBox="0 0 14 14"><path d="M0.5 0.5h8M0.5 0.5v10" stroke="#999"/><path d="M3 3h8v4M3 3v10h4" fill="none" stroke="#888"/><rect x="7" y="7" width="7" height="7" fill="#e0606a"/><path d="M8.5 8.5l4 4M12.5 8.5l-4 4" stroke="#fff"/></svg>删除</div>
              <svg class="more" viewBox="0 0 7 6"><path d="M0 0l3 3-3 3zM4 0l3 3-3 3z" fill="#666"/></svg>
            </div>
            <div class="psearch"><svg viewBox="0 0 12 12"><circle cx="5" cy="5" r="3.8" fill="none" stroke="#2d86c8" stroke-width="1.3"/><path d="M8 8l3 3" stroke="#2d86c8" stroke-width="1.5"/></svg></div>
            <div class="tree"><div class="c">框架梁</div><div class="sel2">KL-1</div></div>
          </div>
          <div class="panel p2">
            <div class="phead"><svg viewBox="0 0 7 7"><path d="M0 0l7 7M7 0L0 7" stroke="#777" stroke-width="1.4"/></svg></div>
            <div class="ptabs"><div class="ptab">图层管理</div></div>
            <div class="trow head"><div class="n">名称</div><div>属性值</div><div>附加</div></div>
            ${ROWS.map((r) => html`<div class="trow">
              <div class="n ${r.b ? "b" : ""} ${r.crop ? "crop" : ""}">${r.n ?? ""}</div>
              <div class="v ${r.g ? "g" : ""}">${this.value(r.v)}</div>
              <div class="x">${r.c ? html`<span></span>` : null}</div>
            </div>`)}
          </div>
        </div>
        <div class="gap"><i></i></div>
        <div class="canvas">
          ${this.canvas()}
          <div class="float">${this.floatBar()}</div>
        </div>
        <div class="gap"><i></i></div>
        <div class="right">
          <div class="phead"></div>
          <div class="rt">显</div>
          <div class="rt2"><div>图</div></div>
          <div class="rgrid">
            <div class="rh"></div>
            <div class="rb">
              <div class="minus">−</div>
              <span class="bx b1"></span><span class="bx b2"></span><span class="bx b3"></span><span class="bx b4"></span><span class="bx b5"></span><span class="bx b6"></span>
            </div>
          </div>
        </div>
      </div>
      <div class="status">
        <div class="txt st0"></div>
        <div class="txt" style="width:42px">层高：</div><div class="txt" style="width:42px">4</div>
        <div class="txt" style="width:44px">标高：</div><div class="txt" style="width:192px">0.00~4.00</div>
        <div class="txt" style="width:38px">隐藏：</div><div class="txt" style="width:64px">1</div>
        <div class="sb a1"><svg viewBox="0 0 25 12"><path d="M12 5v7" stroke="#555"/></svg></div>
        <div class="sb on"><svg viewBox="0 0 32 10"><rect x="3" y="3" width="5" height="7" fill="#f4a25e"/><path d="M8 5.5h11V10" fill="none" stroke="#3b8de0"/></svg></div>
        <div class="sb a2"><svg viewBox="0 0 25 12"><path d="M7 2l5 8 5-8M12 10v2" fill="none" stroke="#aaa"/></svg></div>
        <div class="sb a3"><svg viewBox="0 0 33 12"><path d="M15 8l3-5" stroke="#555"/></svg></div>
        <div class="sb a4"><svg viewBox="0 0 36 12"><path d="M14 5v7M14 9h10" stroke="#555"/></svg></div>
        <div class="sb w1">跨图层选择</div><div class="sb w2">折线选择</div>
        <div class="txt msg">按鼠标左键指定第一个角点，或拾取构件图元</div>
      </div>
    </div>
    <gen-dialog></gen-dialog>
    <svg class="over" viewBox="0 0 1407 1008">
      <rect x="1215.5" y="32" width="98" height="25" rx="2" fill="none" stroke="#f01414" stroke-width="3"/>
      <polygon points="1227.4,60.6 1228.6,63.4 669.5,327.5 668,332.7 651,332 660.7,319.3 666.5,321.1" fill="#f4201c"/>
    </svg>`;
  }
}
